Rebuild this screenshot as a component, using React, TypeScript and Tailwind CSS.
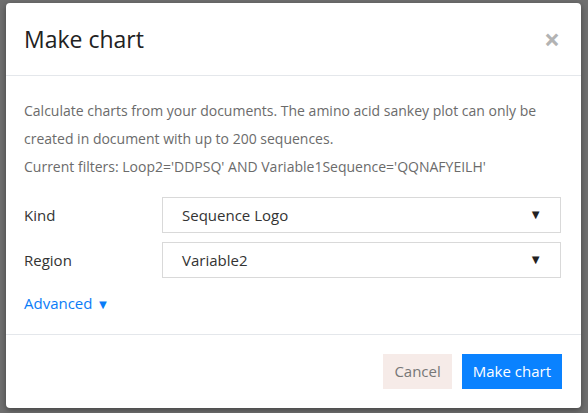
export default function App() {
  return (
    <div
      className="h-[413px] w-[588px] overflow-hidden bg-[#6f6f6f] pl-[6px] pt-[3px]"
      style={{ fontFamily: '"Open Sans", "Noto Sans", sans-serif' }}
    >
      <div className="flex h-[405px] w-[575px] flex-col rounded-[4px] bg-white shadow-[0_2px_6px_rgba(0,0,0,0.4)]">
        {/* Header */}
        <div className="flex h-[73px] items-center justify-between border-b border-[#e4e7eb] px-[18px]">
          <h2 className="text-[23px] text-[#222]">Make chart</h2>
          <span className="mr-[3px] text-[28px] font-bold leading-none text-[#b3b3b3]">×</span>
        </div>

        {/* Body */}
        <div className="flex-1 px-[18px] pt-[21px] text-[14px] text-[#222]">
          <p className="leading-[28px] text-[#6b6b6b]">
            Calculate charts from your documents. The amino acid sankey plot can only be created in document with up to 200 sequences.
          </p>
          <p className="leading-[28px] text-[#6b6b6b]">
            Current filters: Loop2='DDPSQ' AND Variable1Sequence='QQNAFYEILH'
          </p>

          <div className="mt-[16px] flex flex-col gap-[9px] text-[15px]">
            {[
              ['Kind', 'Sequence Logo'],
              ['Region', 'Variable2'],
            ].map(([label, value]) => (
              <div key={label} className="flex items-center">
                <div className="w-[138px] text-[#333]">{label}</div>
                <div className="flex h-[36px] w-[399px] items-center justify-between border border-[#d9d9d9] pl-[19px] pr-[18px] text-[#333]">
                  <span>{value}</span>
                  <span className="text-[13px] text-[#222]">▼</span>
                </div>
              </div>
            ))}
          </div>

          <div className="mt-[14px] text-[15px] text-[#0a7cf7]">
            Advanced <span className="text-[13px]">▼</span>
          </div>
        </div>

        {/* Footer */}
        <div className="flex h-[74px] items-center justify-end gap-[10px] border-t border-[#e4e7eb] pr-[19px]">
          <button className="h-[35px] bg-[#f6ebe8] px-[11px] text-[15px] text-[#777]">Cancel</button>
          <button className="h-[35px] bg-[#0a82ff] px-[11px] text-[15px] text-white">Make chart</button>
        </div>
      </div>
    </div>
  )
}
